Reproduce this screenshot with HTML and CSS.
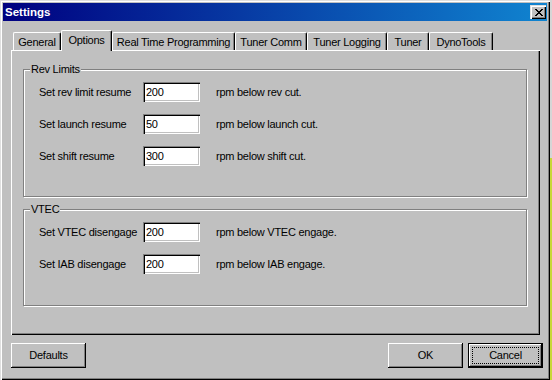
FILE: index.html
```html
<!DOCTYPE html>
<html>
<head>
<meta charset="utf-8">
<link rel="stylesheet" href="styles.css">
</head>
<body>
<div class="screen">
  <div class="window">
    <div class="titlebar">
      <span class="title">Settings</span>
      <div class="close">
        <svg width="8" height="7" viewBox="0 0 8 7" shape-rendering="crispEdges">
          <path fill="#000" d="M0 0h2v1H0zM6 0h2v1H6zM1 1h2v1H1zM5 1h2v1H5zM2 2h4v1H2zM3 3h2v1H3zM2 4h4v1H2zM1 5h2v1H1zM5 5h2v1H5zM0 6h2v1H0zM6 6h2v1H6z"/>
        </svg>
      </div>
    </div>
    <div class="content">
      <div class="tabs">
        <div class="tab t-general">General</div>
        <div class="tab sel t-options">Options</div>
        <div class="tab t-rtp">Real Time Programming</div>
        <div class="tab t-comm">Tuner Comm</div>
        <div class="tab t-log">Tuner Logging</div>
        <div class="tab t-tuner">Tuner</div>
        <div class="tab t-dyno">DynoTools</div>
      </div>
      <div class="panel">
        <div class="group g-rev">
          <span class="legend">Rev Limits</span>
          <div class="row"><span class="lbl">Set rev limit resume</span><div class="edit">200</div><span class="unit">rpm below rev cut.</span></div>
          <div class="row"><span class="lbl">Set launch resume</span><div class="edit">50</div><span class="unit">rpm below launch cut.</span></div>
          <div class="row"><span class="lbl">Set shift resume</span><div class="edit">300</div><span class="unit">rpm below shift cut.</span></div>
        </div>
        <div class="group g-vtec">
          <span class="legend">VTEC</span>
          <div class="row"><span class="lbl">Set VTEC disengage</span><div class="edit">200</div><span class="unit">rpm below VTEC engage.</span></div>
          <div class="row"><span class="lbl">Set IAB disengage</span><div class="edit">200</div><span class="unit">rpm below IAB engage.</span></div>
        </div>
      </div>
      <div class="buttons">
        <div class="btn">Defaults</div>
        <div class="btn b-ok">OK</div>
        <div class="btn default">Cancel</div>
      </div>
    </div>
  </div>
  <div class="edge"></div>
</div>
</body>
</html>
```

FILE: styles.css
```css
html, body {
  margin: 0;
  padding: 0;
}
body {
  font-family: "Liberation Sans", Arial, sans-serif;
  font-size: 11px;
  line-height: 13px;
  letter-spacing: -0.25px;
  color: #000;
  background: #c0c0c0;
}
.screen {
  display: flex;
  width: 552px;
  height: 380px;
}
.window {
  box-sizing: border-box;
  width: 550px;
  height: 380px;
  padding: 3px;
  background: #c0c0c0;
  box-shadow: inset 1px 1px #dfdfdf, inset 2px 2px #fff, inset -1px -1px #000, inset -2px -2px #808080;
  display: flex;
  flex-direction: column;
}
.edge {
  width: 2px;
  height: 380px;
  background: linear-gradient(to bottom, #d6d6d6 0, #d6d6d6 158px, #c8d838 158px, #c8d838 100%);
}
.titlebar {
  height: 18px;
  display: flex;
  align-items: center;
  justify-content: space-between;
  padding: 0 1px 0 2px;
  background: linear-gradient(to right, #000080, #1084d0);
}
.title {
  color: #fff;
  font-weight: bold;
  font-size: 11.5px;
  letter-spacing: 0;
}
.close {
  box-sizing: border-box;
  width: 16px;
  height: 14px;
  background: #c0c0c0;
  box-shadow: inset 1px 1px #dfdfdf, inset 2px 2px #fff, inset -1px -1px #000, inset -2px -2px #808080;
  display: flex;
  align-items: center;
  justify-content: center;
  padding-left: 1px;
}
.close svg {
  display: block;
}
.content {
  display: flex;
  flex-direction: column;
  padding-top: 9px;
}
.tabs {
  position: relative;
  z-index: 1;
  display: flex;
  align-items: flex-end;
  margin-left: 10px;
}
.tab {
  box-sizing: border-box;
  height: 18px;
  padding-top: 3px;
  text-align: center;
  white-space: nowrap;
  background: #c0c0c0;
  border-left: 1px solid #fff;
  border-top: 1px solid #fff;
  border-right: 1px solid #000;
  border-radius: 2px 2px 0 0;
  box-shadow: inset -1px 0 #808080;
}
.tab.sel {
  height: 21px;
  margin-bottom: -1px;
  position: relative;
  z-index: 2;
}
.t-general { width: 48px; }
.t-options { width: 51px; }
.t-rtp { width: 123px; }
.t-comm { width: 72px; }
.t-log { width: 80px; }
.t-tuner { width: 42px; }
.t-dyno { width: 64px; }
.panel {
  box-sizing: border-box;
  width: 529px;
  height: 285px;
  margin-left: 8px;
  padding: 19px 0 0 12px;
  background: #c0c0c0;
  box-shadow: inset 1px 1px #fff, inset -1px -1px #000, inset -2px -2px #808080;
  display: flex;
  flex-direction: column;
  gap: 12px;
}
.group {
  position: relative;
  box-sizing: border-box;
  width: 504px;
  border: 1px solid #808080;
  box-shadow: inset 1px 1px #fff, 1px 1px #fff;
  padding: 12px 0 0 15px;
  display: flex;
  flex-direction: column;
  gap: 12px;
}
.g-rev { height: 128px; }
.g-vtec { height: 97px; }
.legend {
  position: absolute;
  left: 6px;
  top: -7px;
  padding: 0 1px;
  background: #c0c0c0;
}
.row {
  height: 20px;
  display: flex;
  align-items: center;
}
.lbl {
  width: 104px;
  white-space: nowrap;
}
.edit {
  box-sizing: border-box;
  width: 57px;
  height: 20px;
  padding: 0 3px;
  line-height: 20px;
  background: #fff;
  box-shadow: inset 1px 1px #808080, inset 2px 2px #000, inset -1px -1px #fff, inset -2px -2px #c0c0c0;
}
.unit {
  margin-left: 16px;
  white-space: nowrap;
}
.buttons {
  display: flex;
  margin-top: 8px;
  padding: 0 4px 0 8px;
  gap: 5px;
}
.btn {
  position: relative;
  box-sizing: border-box;
  width: 75px;
  height: 25px;
  display: flex;
  align-items: center;
  justify-content: center;
  background: #c0c0c0;
  box-shadow: inset -1px -1px #000, inset 1px 1px #fff, inset -2px -2px #808080;
}
.b-ok {
  margin-left: auto;
}
.btn.default {
  box-shadow: inset 0 0 0 1px #000, inset -2px -2px #000, inset 2px 2px #fff, inset -3px -3px #808080;
}
.btn.default::after {
  content: "";
  position: absolute;
  left: 4px;
  top: 4px;
  right: 4px;
  bottom: 4px;
  border: 1px dotted #000;
}
```
